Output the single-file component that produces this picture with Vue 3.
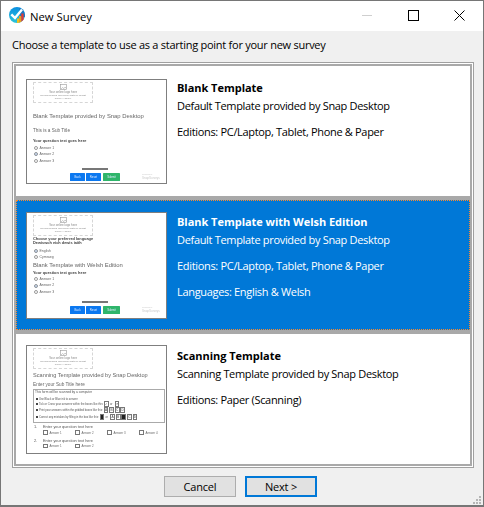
<script setup>
const templates = [
  {
    id: 'blank', kind: 'blank', title: 'Blank Template',
    lines: ['Default Template provided by Snap Desktop', 'Editions: PC/Laptop, Tablet, Phone & Paper'],
  },
  {
    id: 'welsh', kind: 'welsh', title: 'Blank Template with Welsh Edition', selected: true,
    lines: ['Default Template provided by Snap Desktop', 'Editions: PC/Laptop, Tablet, Phone & Paper', 'Languages: English & Welsh'],
  },
  {
    id: 'scan', kind: 'scan', title: 'Scanning Template',
    lines: ['Scanning Template provided by Snap Desktop', 'Editions: Paper (Scanning)'],
  },
]
const answers = ['Answer 1', 'Answer 2', 'Answer 3']
const rules = [
  { text: 'Use Black or Blue ink to answer', before: [], boxes: [], cls: 'short' },
  { text: 'Tick or Cross your answers within the boxes like this:', before: ['✓'], boxes: ['✕'], cls: 'short' },
  { text: 'Print your answers within the gridded boxes like this:', before: [], boxes: ['A', 'B', 'C', 'D'], cls: '' },
  { text: 'Correct any mistakes by filling in the box like this:', before: ['■'], boxes: ['A', 'B', '■', 'C', 'D'], cls: '' },
]
</script>

<template>
  <div class="window">
    <header class="titlebar">
      <svg class="logo" viewBox="0 0 16 16" width="16" height="16">
        <defs>
          <linearGradient id="lg" x1="0" y1="0" x2="0" y2="1">
            <stop offset="0" stop-color="#0a8ee0" />
            <stop offset="1" stop-color="#2cc6d8" />
          </linearGradient>
        </defs>
        <circle cx="8" cy="8" r="8" fill="url(#lg)" />
        <path d="M10 1 A8 8 0 0 1 16 8 L16 10 L11 10 Z" fill="#1b78c4" />
        <path d="M2.3 7.3 L6 11 L13 2.6" fill="none" stroke="#fff" stroke-width="2.4" />
        <path d="M8 15.9 V11.5 H10 V15.8 Z" fill="#f4c01c" />
        <path d="M10 15.8 V9 H12.3 V14.8 Z" fill="#e8a020" />
        <path d="M12.3 14.8 V6.5 H14.6 V12.8 Z" fill="#e23a34" />
      </svg>
      <span class="wintitle">New Survey</span>
      <div class="controls">
        <span class="ctl min"><i></i></span>
        <span class="ctl max"><i></i></span>
        <span class="ctl close">
          <svg viewBox="0 0 11 11" width="11" height="11"><path d="M0.5 0.5 L10.5 10.5 M10.5 0.5 L0.5 10.5" stroke="#000" stroke-width="1" fill="none" /></svg>
        </span>
      </div>
    </header>

    <p class="prompt">Choose a template to use as a starting point for your new survey</p>

    <div class="frame">
      <ul class="list">
        <li v-for="t in templates" :key="t.id" class="item" :class="{ selected: t.selected }">
          <div class="thumb" :class="t.kind">
            <div class="logobox">
              <svg viewBox="0 0 8 7" width="7" height="6"><rect x="0.5" y="0.5" width="7" height="6" fill="none" stroke="#999" stroke-width="0.7" /><path d="M1 6 L3 4 L5 6 M4.5 5 L6 3.5 L7 5" fill="none" stroke="#999" stroke-width="0.6" /></svg>
              <span class="logotext">Your online logo here</span>
              <span class="logotext tiny">Recommended maximum width or height</span>
              <span class="logotext tiny">600px × 300px</span>
            </div>

            <template v-if="t.kind === 'blank'">
              <div class="heading">Blank Template provided by Snap Desktop</div>
              <div class="subhead">This is a Sub Title</div>
              <div class="question">Your question text goes here</div>
              <div v-for="(a, i) in answers" :key="a" class="answer"><span class="radio" :class="{ on: i === 1 }"></span>{{ a }}</div>
            </template>

            <template v-else-if="t.kind === 'welsh'">
              <div class="question">Choose your preferred language</div>
              <div class="question tight">Dewiswch eich dewis iaith</div>
              <div class="answer lang"><span class="radio on"></span>English</div>
              <div class="answer"><span class="radio"></span>Cymraeg</div>
              <div class="heading">Blank Template with Welsh Edition</div>
              <div class="question">Your question text goes here</div>
              <div v-for="(a, i) in answers" :key="a" class="answer"><span class="radio" :class="{ on: i === 1 }"></span>{{ a }}</div>
            </template>

            <template v-else>
              <div class="heading">Scanning Template provided by Snap Desktop</div>
              <div class="subhead">Enter your Sub Title here</div>
              <div class="notice">
                <div class="noticehead">This form will be scanned by a computer</div>
                <div v-for="r in rules" :key="r.text" class="rule" :class="r.cls">
                  <span class="dot"></span>{{ r.text }}
                  <span v-for="(b, i) in r.before" :key="i" class="mark" :class="{ fill: b === '■' }">{{ b === '■' ? '' : b }}</span>
                  <span v-if="r.before.length" class="or">or</span>
                  <span v-for="(b, i) in r.boxes" :key="i" class="mark" :class="{ fill: b === '■' }">{{ b === '■' ? '' : b }}</span>
                </div>
              </div>
              <div class="scanq"><span>1.</span>Enter your question text here</div>
              <div class="checks">
                <span v-for="n in 4" :key="n" class="check"><i></i>Answer {{ n }}</span>
              </div>
              <div class="scanq"><span>2.</span>Enter your question text here</div>
              <div class="checks">
                <span v-for="n in 2" :key="n" class="check"><i></i>Answer {{ n }}</span>
              </div>
            </template>

            <template v-if="t.kind !== 'scan'">
              <div class="progress"></div>
              <div class="navrow">
                <span class="nav">Back</span>
                <span class="nav">Reset</span>
                <span class="nav green">Submit</span>
                <span class="brand"><small>Powered by</small>SnapSurveys</span>
              </div>
            </template>
          </div>

          <div class="info">
            <h2 class="name">{{ t.title }}</h2>
            <p v-for="(l, i) in t.lines" :key="l" class="line" :class="{ first: i === 0 }">{{ l }}</p>
          </div>
        </li>
      </ul>
    </div>

    <footer class="footer">
      <button class="btn" type="button">Cancel</button>
      <button class="btn primary" type="button">Next &gt;</button>
    </footer>

    <svg class="grip" viewBox="0 0 8 8" width="8" height="8">
      <path d="M6 0h2v2H6zM3 3h2v2H3zM6 3h2v2H6zM0 6h2v2H0zM3 6h2v2H3zM6 6h2v2H6z" fill="#b5b5b5" />
    </svg>
  </div>
</template>

<style>
html, body { margin: 0; padding: 0; background: #f0f0f0; }
</style>

<style scoped>
.window {
  position: relative;
  box-sizing: border-box;
  width: 484px;
  height: 507px;
  background: #f0f0f0;
  border: 1px solid #767676;
  border-bottom-width: 2px;
  font-family: "Open Sans", "Noto Sans", sans-serif;
  font-size: 11px;
  color: #000;
  display: flex;
  flex-direction: column;
}
.titlebar {
  height: 30px;
  background: #fff;
  display: flex;
  align-items: center;
  padding-left: 8px;
  flex: none;
}
.logo { display: block; margin-top: -2px; }
.wintitle { margin-left: 5px; font-size: 11.3px; margin-top: 1px; }
.controls { margin-left: auto; margin-right: 1px; display: flex; height: 100%; box-sizing: border-box; padding-bottom: 2px; }
.ctl { width: 46px; display: flex; align-items: center; justify-content: center; }
.min i { display: block; width: 10px; height: 1px; background: #cfcfcf; }
.max i { display: block; box-sizing: border-box; width: 11px; height: 11px; border: 1px solid #000; }
.close svg { display: block; }
.prompt {
  margin: 0;
  height: 31px;
  line-height: 28px;
  padding-left: 11px;
  flex: none;
  letter-spacing: -0.26px;
}
.frame {
  margin-left: 11px;
  width: 462px;
  height: 406px;
  box-sizing: border-box;
  border: 1px solid #a0a0a0;
  padding: 1px;
  background: #fff;
  flex: none;
}
.list {
  list-style: none;
  margin: 0;
  padding: 0;
  box-sizing: border-box;
  height: 402px;
  border: 2px solid #a9a9a9;
  background: #a9a9a9;
  display: flex;
  flex-direction: column;
  gap: 4px;
}
.item {
  box-sizing: border-box;
  height: 130px;
  background: #fff;
  padding-left: 10px;
  display: flex;
  align-items: center;
  flex: none;
}
.item.selected {
  background: #0078d7;
  border: 1px dotted #ff8a2a;
  padding-left: 9px;
  color: #fff;
}
.thumb {
  box-sizing: border-box;
  width: 141px;
  background: #fff;
  border: 1px solid #7f7f7f;
  flex: none;
  padding: 2px 5px 0 6px;
  overflow: hidden;
  font-family: "Liberation Sans", sans-serif;
  color: #666;
  display: flex;
  flex-direction: column;
  align-items: flex-start;
}
.thumb > * { filter: blur(0.35px); }
.thumb.blank { height: 105px; }
.thumb.welsh { height: 107px; }
.thumb.scan { height: 109px; }
.logobox {
  box-sizing: border-box;
  width: 60px;
  height: 21px;
  border: 1px dashed #d6d6d6;
  border-radius: 1px;
  display: flex;
  flex-direction: column;
  align-items: center;
  flex: none;
  padding-top: 1px;
}
.logobox svg { display: block; flex: none; margin-bottom: 1px; }
.logotext { font-size: 3px; line-height: 3.2px; white-space: nowrap; color: #888; }
.logotext.tiny { font-size: 2.5px; line-height: 3px; }
.heading { font-size: 5.9px; line-height: 7px; white-space: nowrap; color: #666; }
.blank .heading { margin-top: 10px; }
.welsh .heading { margin-top: 1px; }
.scan .heading { margin-top: 3px; font-size: 5.6px; }
.subhead { font-size: 4.7px; line-height: 6px; color: #666; }
.blank .subhead { margin-top: 8px; }
.scan .subhead { margin-top: 3px; }
.question { font-size: 3.9px; line-height: 5px; font-weight: 700; color: #444; white-space: nowrap; }
.blank .question { margin-top: 4px; }
.welsh .logobox + .question { margin-top: 0; }
.question.tight { margin-top: -1px; }
.welsh .heading + .question { margin-top: 1px; }
.welsh .heading + .question + .answer { margin-top: 1px; }
.blank .question + .answer { margin-top: 2px; }
.answer { font-size: 3.5px; line-height: 6.6px; height: 6.6px; display: flex; align-items: center; gap: 1.5px; color: #666; flex: none; }
.answer.lang { margin-top: 3px; }
.radio { box-sizing: border-box; width: 4px; height: 4px; border: 0.5px solid #999; border-radius: 50%; background: #fff; flex: none; margin-left: 1px; }
.radio.on { background: #3a7bd5; box-shadow: inset 0 0 0 0.7px #fff; }
.progress { width: 26px; height: 2px; background: #777; margin: 4px 0 0 49px; flex: none; }
.welsh .progress { margin-top: 6px; }
.navrow { position: relative; display: flex; gap: 1px; margin: 3px 0 0 37px; width: 95px; flex: none; }
.nav { width: 15px; height: 8px; background: #0b78f0; color: #dfeaff; font-size: 2.8px; line-height: 8px; text-align: center; border-radius: 0.5px; }
.nav.green { width: 17px; margin-left: 1px; background: #2fb56b; }
.brand { position: absolute; right: -1px; top: 0; width: 24px; font-size: 3px; line-height: 4px; color: #c8c8c8; white-space: nowrap; }
.brand small { display: block; font-size: 2px; line-height: 3px; }
.notice {
  box-sizing: border-box;
  width: 132px;
  height: 34px;
  border: 0.6px solid #aaa;
  margin-top: 1px;
  padding: 0 1px;
  flex: none;
}
.noticehead { font-size: 3.2px; line-height: 5px; height: 7px; color: #555; }
.rule { font-size: 2.75px; line-height: 7px; height: 7px; display: flex; align-items: center; color: #555; white-space: nowrap; }
.rule.short { height: 5px; }
.dot { width: 1.5px; height: 1.5px; border-radius: 50%; background: #222; margin: 0 1.4px 0 1px; flex: none; }
.mark { box-sizing: border-box; width: 4.8px; height: 5.4px; border: 0.5px solid #777; font-size: 3.2px; line-height: 4.4px; text-align: center; margin-left: 0.8px; color: #444; flex: none; }
.mark.fill { background: #222; }
.or { margin: 0 1.5px 0 1px; }
.scanq { font-size: 3.9px; line-height: 5px; margin-top: 1.5px; color: #555; white-space: nowrap; flex: none; }
.scanq span { display: inline-block; width: 9px; margin-left: 1px; }
.checks { display: flex; gap: 10px; padding-left: 10px; height: 7px; align-items: center; flex: none; }
.check { display: flex; align-items: center; gap: 2px; font-size: 2.9px; width: 22px; color: #666; white-space: nowrap; }
.check i { box-sizing: border-box; width: 4.5px; height: 4.5px; border: 0.5px solid #777; flex: none; }
.info {
  align-self: flex-start;
  margin-left: 10px;
  padding-top: 13px;
}
.selected .info { margin-left: 10px; padding-top: 12px; }
.name { margin: 0; font-size: 11px; font-weight: 700; line-height: 18px; letter-spacing: -0.03px; }
.line { margin: 8px 0 0; line-height: 18px; letter-spacing: -0.32px; }
.line.first { margin-top: 0; }
.footer {
  margin-top: 8px;
  padding-left: 163px;
  display: flex;
  gap: 9px;
  flex: none;
}
.btn {
  box-sizing: border-box;
  width: 72px;
  height: 21px;
  background: #e1e1e1;
  border: 1px solid #adadad;
  font: inherit;
  letter-spacing: -0.2px;
  color: #000;
  padding: 0;
}
.btn.primary { border: 2px solid #0078d7; }
.grip { position: absolute; right: 2px; bottom: 1px; display: block; }
</style>
